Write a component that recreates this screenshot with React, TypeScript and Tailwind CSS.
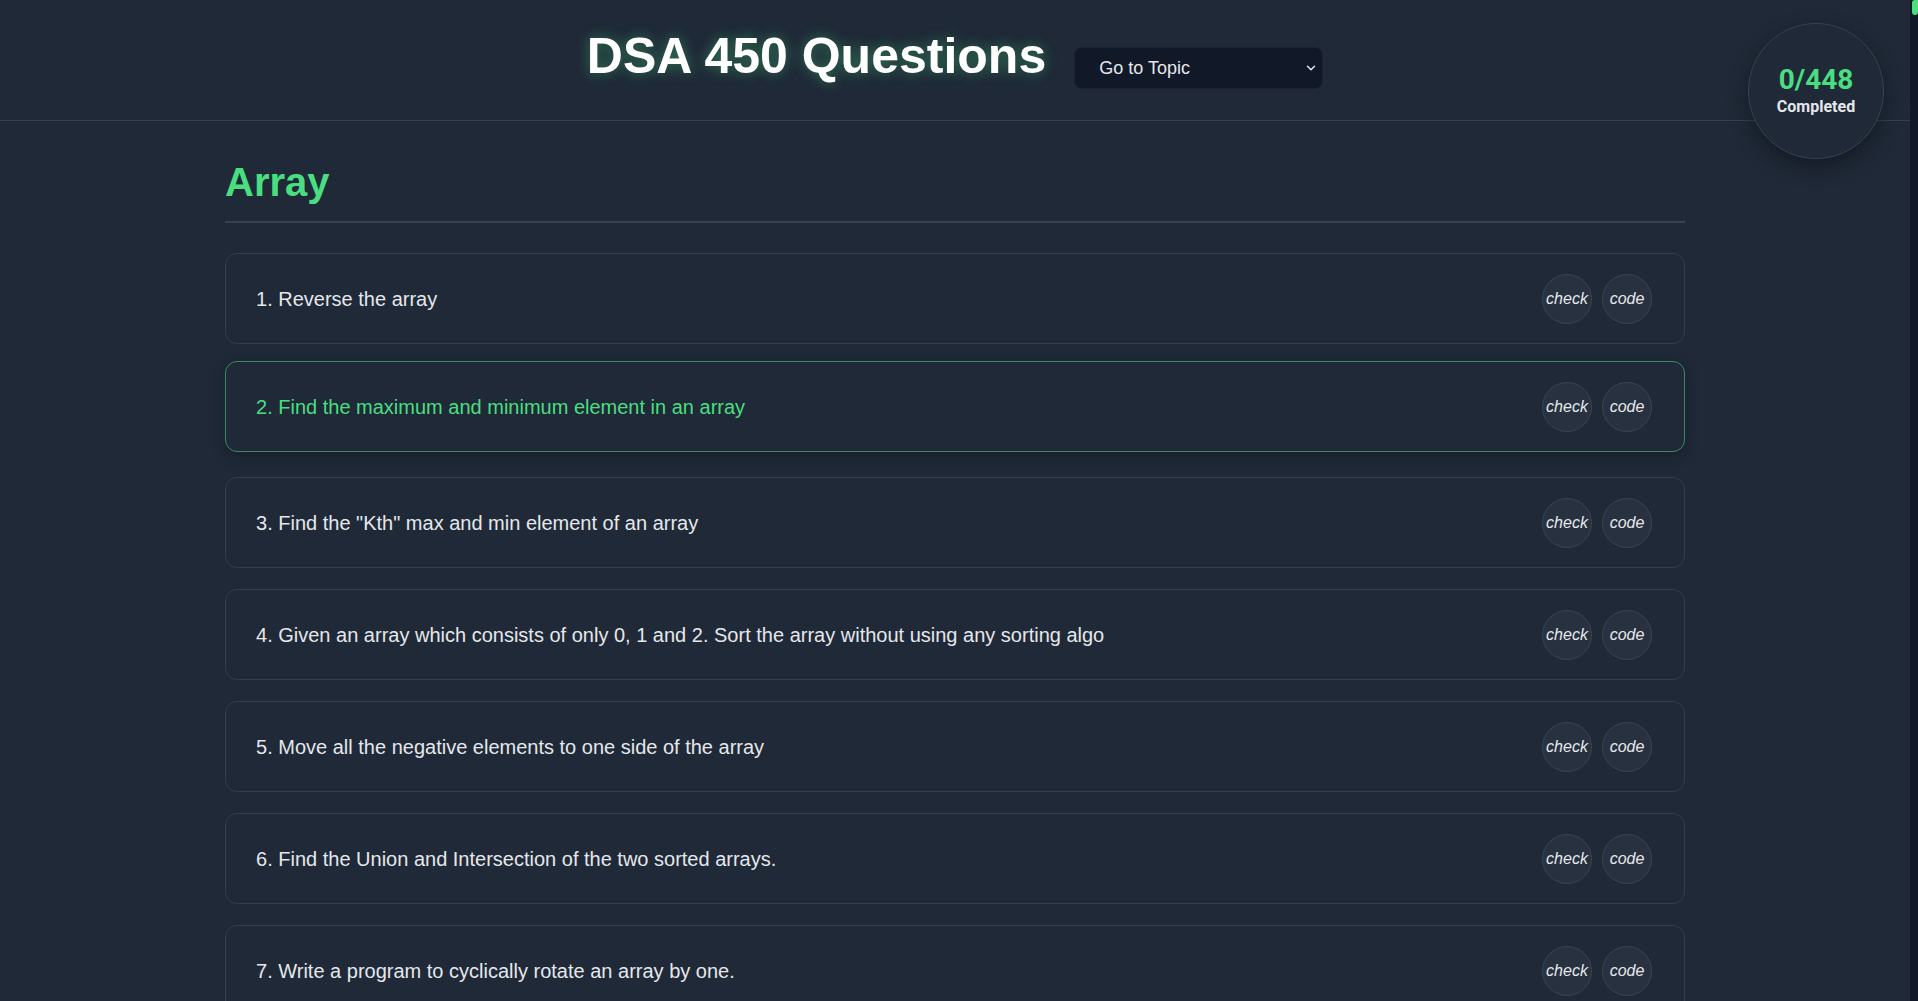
import React from "react";
import { ChevronDown } from "lucide-react";

type Question = {
  id: number;
  title: string;
  active?: boolean;
};

const questions: Question[] = [
  { id: 1, title: "Reverse the array" },
  { id: 2, title: "Find the maximum and minimum element in an array", active: true },
  { id: 3, title: 'Find the "Kth" max and min element of an array' },
  {
    id: 4,
    title:
      "Given an array which consists of only 0, 1 and 2. Sort the array without using any sorting algo",
  },
  { id: 5, title: "Move all the negative elements to one side of the array" },
  { id: 6, title: "Find the Union and Intersection of the two sorted arrays." },
  { id: 7, title: "Write a program to cyclically rotate an array by one." },
];

const RoundButton = ({ label }: { label: string }) => {
  return (
    <button className="flex h-[50px] w-[50px] items-center justify-center rounded-full border border-[#3a4453] bg-[#283140] text-[16px] italic text-[#e5e7eb]">
      {label}
    </button>
  );
};

const QuestionRow = ({ q }: { q: Question }) => {
  return (
    <div
      className={
        q.active
          ? "flex h-[91px] -translate-y-1 items-center justify-between rounded-xl border border-[#3b8a63] bg-[#1f2937] pl-[30px] pr-8 shadow-[0_4px_14px_rgba(0,0,0,0.25)]"
          : "flex h-[91px] items-center justify-between rounded-xl border border-[#343e4d] bg-[#1f2937] pl-[30px] pr-8"
      }
    >
      <span
        className={
          q.active ? "text-[20px] text-[#4ade80]" : "text-[20px] text-[#e5e7eb]"
        }
      >
        {q.id}. {q.title}
      </span>
      <div className="flex items-center gap-[10px]">
        <RoundButton label="check" />
        <RoundButton label="code" />
      </div>
    </div>
  );
};

export default function App() {
  return (
    <div className="flex h-screen w-full overflow-hidden bg-[#1f2937] font-[family-name:Liberation_Sans,Arial,sans-serif]">
      <div className="relative h-full flex-1 overflow-hidden">
        {/* header */}
        <header className="flex h-[121px] items-start justify-center gap-[28px] border-b border-[#354052] pt-[31px]">
          <h1 className="text-[50px] font-bold leading-none text-white [text-shadow:0_0_14px_rgba(74,222,128,0.45)]">
            DSA 450 Questions
          </h1>
          <div className="relative mt-[16px]">
            <select className="h-[42px] w-[249px] appearance-none rounded-lg border border-[#1a2230] bg-[#111827] pl-[24px] font-[family-name:Liberation_Sans,Arial,sans-serif] text-[18px] text-[#e5e7eb] outline-none">
              <option>Go to Topic</option>
              <option>Array</option>
              <option>Matrix</option>
              <option>String</option>
            </select>
            <ChevronDown
              size={14}
              strokeWidth={2.5}
              className="pointer-events-none absolute right-[5px] top-[14px] text-[#e5e7eb]"
            />
          </div>
        </header>

        {/* progress circle */}
        <div className="absolute right-[26px] top-[23px] flex h-[136px] w-[136px] flex-col items-center justify-center rounded-full border border-[#374151] bg-[#1f2937] font-[family-name:Roboto,sans-serif] shadow-[0_8px_20px_rgba(0,0,0,0.35)]">
          <span className="text-[28px] font-bold leading-[32px] text-[#4ade80]">0/448</span>
          <span className="text-[16px] font-bold leading-[22px] text-[#e5e7eb]">Completed</span>
        </div>

        {/* topic */}
        <main className="mx-auto w-[1460px] pt-[41px]">
          <h2 className="border-b-2 border-[#374151] pb-[19px] text-[40px] font-bold leading-[40px] text-[#4ade80]">
            Array
          </h2>
          <div className="mt-[30px] flex flex-col gap-[21px]">
            {questions.map((q) => (
              <QuestionRow key={q.id} q={q} />
            ))}
          </div>
        </main>
      </div>

      {/* scrollbar */}
      <div className="flex h-full w-2 flex-col bg-[#111827]">
        <div className="ml-[2px] h-[15px] rounded-b-full rounded-tl-full bg-[#4ade80]" />
      </div>
    </div>
  );
}
